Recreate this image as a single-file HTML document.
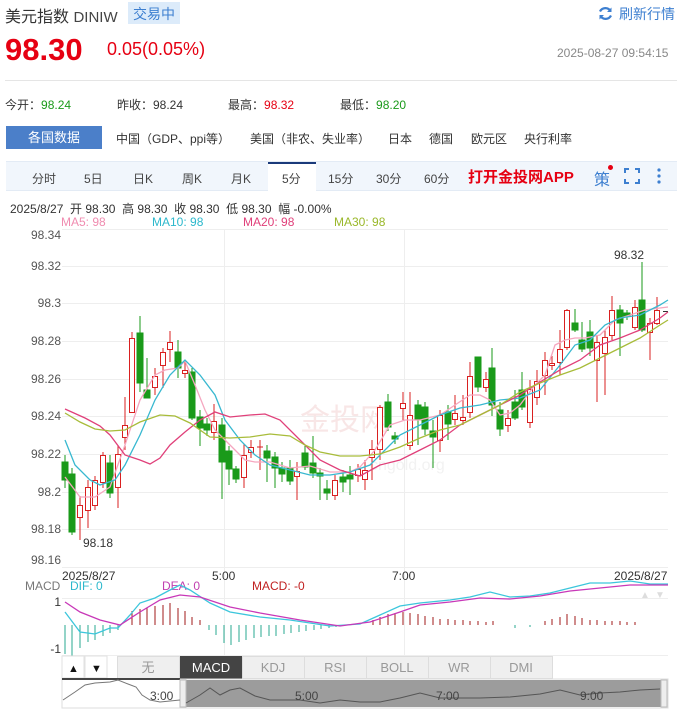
<!DOCTYPE html>
<html><head><meta charset="utf-8"><style>
*{margin:0;padding:0;box-sizing:border-box}
body{width:677px;height:709px;overflow:hidden;background:#fff;font-family:"Liberation Sans","Noto Sans CJK SC",sans-serif;color:#333;position:relative}
.a{position:absolute;white-space:nowrap}
</style></head><body>
<div class="a" style="left:5px;top:3px;font-size:16px;color:#333">美元指数 <span style="font-size:15px;color:#444">DINIW</span></div>
<div class="a" style="left:128px;top:2px;height:22px;padding:2px 5px;background:#dcebfa;color:#3d7fd0;font-size:14px">交易中</div>
<svg class="a" style="left:598px;top:6px" width="15" height="15"><path d="M12.5 5A6 6 0 0 0 2 5.5" fill="none" stroke="#3d7fd0" stroke-width="2.2"/><path d="M2.5 10A6 6 0 0 0 13 9.5" fill="none" stroke="#3d7fd0" stroke-width="2.2"/><path d="M13.5 1.5V6H9" fill="#3d7fd0"/><path d="M1.5 13.5V9H6" fill="#3d7fd0"/></svg>
<div class="a" style="left:619px;top:4px;font-size:14px;color:#3d7fd0">刷新行情</div>
<div class="a" style="left:5px;top:32px;font-size:31px;font-weight:bold;color:#e60012">98.30</div>
<div class="a" style="left:107px;top:39px;font-size:18px;color:#e60012">0.05(0.05%)</div>
<div class="a" style="left:557px;top:46px;font-size:12px;color:#888">2025-08-27 09:54:15</div>
<div class="a" style="left:5px;top:80px;width:672px;height:1px;background:#e5e5e5"></div>
<div class="a" style="left:5px;top:96px;font-size:12px">今开：<span style="color:#1a9a1a">98.24</span></div>
<div class="a" style="left:117px;top:96px;font-size:12px">昨收：98.24</div>
<div class="a" style="left:228px;top:96px;font-size:12px">最高：<span style="color:#e60012">98.32</span></div>
<div class="a" style="left:340px;top:96px;font-size:12px">最低：<span style="color:#1a9a1a">98.20</span></div>
<div class="a" style="left:6px;top:126px;width:96px;height:23px;background:#4b7fc9;color:#fff;font-size:13px;text-align:center;line-height:23px">各国数据</div>
<div class="a" style="left:116px;top:130px;font-size:12px">中国（GDP、ppi等）</div>
<div class="a" style="left:250px;top:130px;font-size:12px">美国（非农、失业率）</div>
<div class="a" style="left:388px;top:130px;font-size:12px">日本</div>
<div class="a" style="left:429px;top:130px;font-size:12px">德国</div>
<div class="a" style="left:471px;top:130px;font-size:12px">欧元区</div>
<div class="a" style="left:524px;top:130px;font-size:12px">央行利率</div>
<div class="a" style="left:6px;top:161px;width:671px;height:30px;background:#f1f6fc;border-top:1px solid #e3ebf5;border-bottom:1px solid #e3ebf5"></div>
<div class="a" style="left:268px;top:162px;width:48px;height:30px;background:#fff;border-top:2px solid #1a3a7a"></div>
<div class="a" style="top:170px;left:0;font-size:12px;color:#444">
<span class="a" style="left:32px">分时</span><span class="a" style="left:84px">5日</span><span class="a" style="left:133px">日K</span><span class="a" style="left:182px">周K</span><span class="a" style="left:231px">月K</span><span class="a" style="left:282px">5分</span><span class="a" style="left:328px">15分</span><span class="a" style="left:376px">30分</span><span class="a" style="left:424px">60分</span></div>
<div class="a" style="left:468px;top:166px;font-size:15px;font-weight:bold;color:#e60012">打开金投网APP</div>
<div class="a" style="left:594px;top:166px;font-size:16px;color:#3d7fd0">策</div>
<div class="a" style="left:608px;top:165px;width:5px;height:5px;border-radius:50%;background:#e60012"></div>
<svg class="a" style="left:624px;top:168px" width="16" height="16"><path d="M1 5V1H5M11 1H15V5M15 11V15H11M5 15H1V11" fill="none" stroke="#3d7fd0" stroke-width="2"/></svg>
<svg class="a" style="left:656px;top:167px" width="6" height="18"><circle cx="3" cy="3" r="1.6" fill="#3d7fd0"/><circle cx="3" cy="9" r="1.6" fill="#3d7fd0"/><circle cx="3" cy="15" r="1.6" fill="#3d7fd0"/></svg>
<div class="a" style="left:10px;top:200px;font-size:12px;color:#333">2025/8/27 &nbsp;开 98.30 &nbsp;高 98.30 &nbsp;收 98.30 &nbsp;低 98.30 &nbsp;幅 -0.00%</div>
<div class="a" style="left:61px;top:215px;font-size:12px;color:#f08cb0">MA5: 98</div>
<div class="a" style="left:152px;top:215px;font-size:12px;color:#2cb8cc">MA10: 98</div>
<div class="a" style="left:243px;top:215px;font-size:12px;color:#e0407a">MA20: 98</div>
<div class="a" style="left:334px;top:215px;font-size:12px;color:#9ab82a">MA30: 98</div>

<svg class="a" style="left:0;top:0" width="677" height="709" font-family="Liberation Sans" font-size="12">
<g stroke="#eee" stroke-width="1">
<line x1="62" y1="229.5" x2="668" y2="229.5"/><line x1="62" y1="266.5" x2="668" y2="266.5"/><line x1="62" y1="303.5" x2="668" y2="303.5"/><line x1="62" y1="341.5" x2="668" y2="341.5"/><line x1="62" y1="379.5" x2="668" y2="379.5"/><line x1="62" y1="416.5" x2="668" y2="416.5"/><line x1="62" y1="454.5" x2="668" y2="454.5"/><line x1="62" y1="492.5" x2="668" y2="492.5"/><line x1="62" y1="529.5" x2="668" y2="529.5"/><line x1="62" y1="567.5" x2="668" y2="567.5"/>
<line x1="224.5" y1="229" x2="224.5" y2="655"/><line x1="404.5" y1="229" x2="404.5" y2="655"/>
<line x1="62" y1="598.5" x2="668" y2="598.5"/><line x1="62" y1="655.5" x2="668" y2="655.5"/>
</g>
<g fill="#555" text-anchor="end">
<text x="61" y="239">98.34</text><text x="61" y="270">98.32</text><text x="61" y="307">98.3</text><text x="61" y="345">98.28</text><text x="61" y="383">98.26</text><text x="61" y="420">98.24</text><text x="61" y="458">98.22</text><text x="61" y="496">98.2</text><text x="61" y="533">98.18</text><text x="61" y="564">98.16</text>
</g>
<text x="83" y="547" fill="#333">98.18</text><text x="614" y="259" fill="#333">98.32</text>
<text x="62" y="580" fill="#333">2025/8/27</text><text x="212" y="580" fill="#333">5:00</text><text x="392" y="580" fill="#333">7:00</text><text x="614" y="580" fill="#333">2025/8/27</text>
<text x="300" y="430" font-size="30" fill="#f8e6e6" font-family="Noto Sans CJK SC">金投网</text>
<text x="370" y="470" font-size="16" fill="#f2f2f2">cngold.org</text>
<g stroke-width="1">
<g stroke="#1a9a1a" fill="#1a9a1a">
<line x1="65" y1="455" x2="65" y2="488"/><rect x="62" y="462" width="6" height="18"/>
<line x1="72" y1="468" x2="72" y2="535"/><rect x="69" y="474" width="6" height="58"/>
<line x1="110" y1="455" x2="110" y2="498"/><rect x="107" y="463" width="6" height="30"/>
<line x1="140" y1="316" x2="140" y2="392"/><rect x="137" y="333" width="6" height="50"/>
<line x1="147" y1="358" x2="147" y2="398"/><rect x="144" y="390" width="6" height="8"/>
<line x1="178" y1="340" x2="178" y2="378"/><rect x="175" y="352" width="6" height="16"/>
<line x1="192" y1="368" x2="192" y2="420"/><rect x="189" y="372" width="6" height="46"/>
<line x1="200" y1="410" x2="200" y2="446"/><rect x="197" y="417" width="6" height="11"/>
<line x1="207" y1="418" x2="207" y2="436"/><rect x="204" y="424" width="6" height="6"/>
<line x1="222" y1="418" x2="222" y2="499"/><rect x="219" y="425" width="6" height="37"/>
<line x1="229" y1="446" x2="229" y2="485"/><rect x="226" y="451" width="6" height="18"/>
<line x1="236" y1="466" x2="236" y2="483"/><rect x="233" y="469" width="6" height="10"/>
<line x1="267" y1="445" x2="267" y2="482"/><rect x="264" y="451" width="6" height="7"/>
<line x1="275" y1="452" x2="275" y2="488"/><rect x="272" y="457" width="6" height="11"/>
<line x1="282" y1="462" x2="282" y2="482"/><rect x="279" y="468" width="6" height="6"/>
<line x1="290" y1="460" x2="290" y2="485"/><rect x="287" y="468" width="6" height="13"/>
<line x1="305" y1="446" x2="305" y2="470"/><rect x="302" y="453" width="6" height="14"/>
<line x1="313" y1="436" x2="313" y2="478"/><rect x="310" y="463" width="6" height="10"/>
<line x1="320" y1="468" x2="320" y2="500"/><rect x="317" y="473" width="6" height="3"/>
<line x1="327" y1="480" x2="327" y2="500"/><rect x="324" y="489" width="6" height="4"/>
<line x1="343" y1="470" x2="343" y2="492"/><rect x="340" y="477" width="6" height="5"/>
<line x1="350" y1="466" x2="350" y2="495"/><rect x="347" y="475" width="6" height="4"/>
<line x1="388" y1="394" x2="388" y2="431"/><rect x="385" y="402" width="6" height="25"/>
<line x1="395" y1="432" x2="395" y2="444"/><rect x="392" y="436" width="6" height="3"/>
<line x1="418" y1="400" x2="418" y2="445"/><rect x="415" y="405" width="6" height="15"/>
<line x1="425" y1="402" x2="425" y2="435"/><rect x="422" y="407" width="6" height="22"/>
<line x1="433" y1="420" x2="433" y2="468"/><rect x="430" y="431" width="6" height="6"/>
<line x1="448" y1="405" x2="448" y2="440"/><rect x="445" y="412" width="6" height="12"/>
<line x1="478" y1="357" x2="478" y2="392"/><rect x="475" y="357" width="6" height="30"/>
<line x1="492" y1="348" x2="492" y2="416"/><rect x="489" y="368" width="6" height="37"/>
<line x1="500" y1="402" x2="500" y2="436"/><rect x="497" y="410" width="6" height="19"/>
<line x1="515" y1="390" x2="515" y2="420"/><rect x="512" y="402" width="6" height="16"/>
<line x1="522" y1="372" x2="522" y2="410"/><rect x="519" y="390" width="6" height="17"/>
<line x1="575" y1="309" x2="575" y2="332"/><rect x="572" y="323" width="6" height="7"/>
<line x1="582" y1="322" x2="582" y2="352"/><rect x="579" y="340" width="6" height="9"/>
<line x1="590" y1="320" x2="590" y2="356"/><rect x="587" y="332" width="6" height="16"/>
<line x1="620" y1="305" x2="620" y2="356"/><rect x="617" y="310" width="6" height="13"/>
<line x1="627" y1="310" x2="627" y2="320"/><rect x="624" y="313" width="6" height="3"/>
<line x1="642" y1="262" x2="642" y2="332"/><rect x="639" y="300" width="6" height="30"/>
</g>
<g stroke="#d92020" fill="#fff">
<line x1="80" y1="496" x2="80" y2="540"/><rect x="77.5" y="505.5" width="5" height="12"/>
<line x1="88" y1="480" x2="88" y2="528"/><rect x="85.5" y="487.5" width="5" height="23"/>
<line x1="95" y1="476" x2="95" y2="510"/><rect x="92.5" y="480.5" width="5" height="25"/>
<line x1="103" y1="452" x2="103" y2="488"/><rect x="100.5" y="455.5" width="5" height="27"/>
<line x1="118" y1="445" x2="118" y2="508"/><rect x="115.5" y="454.5" width="5" height="33"/>
<line x1="125" y1="397" x2="125" y2="450"/><rect x="122.5" y="425.5" width="5" height="12"/>
<line x1="132" y1="332" x2="132" y2="412"/><rect x="129.5" y="338.5" width="5" height="74"/>
<line x1="155" y1="368" x2="155" y2="395"/><rect x="152.5" y="376.5" width="5" height="11"/>
<line x1="163" y1="348" x2="163" y2="388"/><rect x="160.5" y="352.5" width="5" height="13"/>
<line x1="170" y1="331" x2="170" y2="362"/><rect x="167.5" y="342.5" width="5" height="7"/>
<line x1="185" y1="362" x2="185" y2="378"/><rect x="182.5" y="370.5" width="5" height="3"/>
<line x1="214" y1="404" x2="214" y2="440"/><rect x="211.5" y="421.5" width="5" height="11"/>
<line x1="244" y1="444" x2="244" y2="488"/><rect x="241.5" y="455.5" width="5" height="22"/>
<line x1="251" y1="440" x2="251" y2="458"/><rect x="248.5" y="447.5" width="5" height="5"/>
<line x1="260" y1="440" x2="260" y2="470"/><line x1="257" y1="447" x2="263" y2="447"/>
<line x1="297" y1="462" x2="297" y2="500"/><rect x="294.5" y="471.5" width="5" height="5"/>
<line x1="335" y1="475" x2="335" y2="500"/><rect x="332.5" y="480.5" width="5" height="15"/>
<line x1="358" y1="464" x2="358" y2="482"/><rect x="355.5" y="469.5" width="5" height="6"/>
<line x1="365" y1="460" x2="365" y2="490"/><rect x="362.5" y="470.5" width="5" height="9"/>
<line x1="372" y1="440" x2="372" y2="480"/><rect x="369.5" y="449.5" width="5" height="8"/>
<line x1="380" y1="405" x2="380" y2="460"/><rect x="377.5" y="407.5" width="5" height="42"/>
<line x1="403" y1="392" x2="403" y2="420"/><rect x="400.5" y="403.5" width="5" height="5"/>
<line x1="410" y1="392" x2="410" y2="450"/><rect x="407.5" y="415.5" width="5" height="30"/>
<line x1="440" y1="410" x2="440" y2="452"/><rect x="437.5" y="415.5" width="5" height="25"/>
<line x1="455" y1="395" x2="455" y2="425"/><rect x="452.5" y="413.5" width="5" height="6"/>
<line x1="463" y1="395" x2="463" y2="425"/><rect x="460.5" y="417.5" width="5" height="3"/>
<line x1="470" y1="362" x2="470" y2="418"/><rect x="467.5" y="376.5" width="5" height="36"/>
<line x1="486" y1="372" x2="486" y2="392"/><rect x="483.5" y="379.5" width="5" height="8"/>
<line x1="508" y1="410" x2="508" y2="432"/><rect x="505.5" y="418.5" width="5" height="7"/>
<line x1="530" y1="380" x2="530" y2="428"/><rect x="527.5" y="389.5" width="5" height="33"/>
<line x1="537" y1="370" x2="537" y2="405"/><rect x="534.5" y="381.5" width="5" height="16"/>
<line x1="545" y1="352" x2="545" y2="395"/><rect x="542.5" y="360.5" width="5" height="15"/>
<line x1="552" y1="356" x2="552" y2="370"/><rect x="549.5" y="363.5" width="5" height="2"/>
<line x1="560" y1="330" x2="560" y2="375"/><rect x="557.5" y="349.5" width="5" height="13"/>
<line x1="567" y1="309" x2="567" y2="350"/><rect x="564.5" y="310.5" width="5" height="37"/>
<line x1="597" y1="335" x2="597" y2="402"/><rect x="594.5" y="342.5" width="5" height="18"/>
<line x1="605" y1="330" x2="605" y2="395"/><rect x="602.5" y="337.5" width="5" height="16"/>
<line x1="612" y1="296" x2="612" y2="340"/><rect x="609.5" y="310.5" width="5" height="25"/>
<line x1="635" y1="300" x2="635" y2="330"/><rect x="632.5" y="307.5" width="5" height="20"/>
<line x1="650" y1="318" x2="650" y2="360"/><rect x="647.5" y="323.5" width="5" height="9"/>
<line x1="657" y1="297" x2="657" y2="325"/><rect x="654.5" y="310.5" width="5" height="13"/>
<line x1="663" y1="311.5" x2="668" y2="311.5" stroke="#333"/>
</g>
</g>
<g fill="none" stroke-width="1.3">
<polyline stroke="#f5a6bf" points="65,477 80,497 95,497 110,487 125,445 140,400 155,375 165,370 178,368 185,361 195,385 205,410 215,430 225,440 235,450 245,460 255,462 270,462 290,468 310,466 330,472 350,472 360,467 375,450 390,425 405,420 420,420 440,415 455,405 470,395 480,395 490,400 500,415 510,413 520,405 535,385 545,375 555,345 565,340 575,338 585,338 600,335 615,320 630,315 645,310 660,308 668,307"/>
<polyline stroke="#38b8d0" points="65,440 75,465 90,480 100,485 115,480 125,465 140,435 155,400 170,375 185,360 200,375 215,395 225,420 240,440 255,455 270,465 290,470 310,475 330,475 350,472 370,465 385,450 400,435 420,425 440,415 460,408 480,405 500,400 520,398 540,390 560,365 575,345 590,340 605,325 620,318 640,315 660,305 668,300"/>
<polyline stroke="#e0407a" points="65,409 85,418 100,426 110,435 125,455 140,460 150,464 160,458 170,445 185,432 200,420 215,412 230,417 250,415 265,414 280,420 300,440 320,460 340,470 360,476 380,465 400,460 420,450 440,440 460,425 480,415 500,405 520,395 540,382 560,370 580,360 600,345 620,338 640,330 660,318 668,312"/>
<polyline stroke="#a8bc3a" points="65,413 80,422 95,429 110,431 125,430 140,422 160,415 175,416 190,423 210,437 230,438 250,437 270,434 290,436 305,445 320,452 340,456 360,456 380,454 400,447 420,438 440,430 460,425 480,415 500,405 520,392 540,383 560,375 580,368 600,358 620,348 640,338 660,325 668,320"/>
</g>
<text x="25" y="590" fill="#777">MACD</text><text x="70" y="590" fill="#2cb8cc">DIF: 0</text><text x="162" y="590" fill="#c040b0">DEA: 0</text><text x="252" y="590" fill="#c02020">MACD: -0</text>
<text x="61" y="606" fill="#333" text-anchor="end">1</text><text x="61" y="653" fill="#333" text-anchor="end">-1</text>
<g stroke="#2aaa90" stroke-width="1">
<path d="M65 625V654M72 625V656M80 625V648M88 625V642M95 625V640M103 625V636M110 625V633M118 625V630"/>
<path d="M209 625V630M216 625V635M224 625V643M231 625V645M239 625V642M246 625V640M254 625V638M261 625V637M269 625V636M276 625V636M284 625V634M291 625V633M299 625V632M306 625V631M314 625V630M321 625V629M329 625V628M336 625V627M343 625V626"/>
<path d="M515 625V628M530 625V627"/>
</g>
<g stroke="#a01818" stroke-width="1">
<path d="M132 625V611M140 625V609M147 625V608M155 625V606M163 625V605M170 625V603M178 625V608M185 625V611M192 625V617M200 625V620"/>
<path d="M373 625V620M380 625V617M388 625V614M395 625V613M403 625V612M410 625V613M418 625V614M425 625V616M433 625V617M440 625V619M448 625V619M455 625V620M463 625V620M470 625V621M478 625V621M486 625V622M493 625V621"/>
<path d="M545 625V621M552 625V619M560 625V617M567 625V614M575 625V616M582 625V618M590 625V620M597 625V620M605 625V621M612 625V621M620 625V621M627 625V622M635 625V622"/>
</g>
<g fill="none" stroke-width="1.3">
<polyline stroke="#3cc6dc" points="65,612 80,632 95,634 110,628 118,628 130,615 140,603 155,598 170,590 180,585 190,590 210,603 230,612 260,617 290,620 330,626 360,624 380,615 400,606 420,603 450,600 470,597 490,592 510,597 530,596 550,593 570,588 590,583 610,583 630,581 650,584 668,584"/>
<polyline stroke="#c838b8" points="65,602 80,612 100,620 120,625 140,612 160,600 180,595 200,597 230,607 260,613 300,620 340,626 370,622 400,612 420,605 450,602 480,598 510,599 540,596 570,591 600,588 630,585 668,585"/>
</g>
<text x="640" y="598" fill="#ddd" font-size="10">▲</text><text x="655" y="598" fill="#ddd" font-size="10">▼</text>
<rect x="62" y="656" width="22" height="22" fill="#fff" stroke="#e2e2e2"/><rect x="85" y="656" width="22" height="22" fill="#fff" stroke="#e2e2e2"/>
<text x="68" y="672" fill="#111" font-size="11">▲</text><text x="91" y="672" fill="#111" font-size="11">▼</text>
<g stroke="#ddd" fill="#efefef"><rect x="117.5" y="656.5" width="62" height="22"/><rect x="242.5" y="656.5" width="62" height="22"/><rect x="304.5" y="656.5" width="62" height="22"/><rect x="366.5" y="656.5" width="62" height="22"/><rect x="428.5" y="656.5" width="62" height="22"/><rect x="490.5" y="656.5" width="62" height="22"/></g>
<rect x="180" y="656" width="62" height="23" fill="#444"/>
<g font-size="13" text-anchor="middle" fill="#999"><text x="148" y="672" font-family="Noto Sans CJK SC">无</text><text x="211" y="672" fill="#fff">MACD</text><text x="273" y="672">KDJ</text><text x="335" y="672">RSI</text><text x="397" y="672">BOLL</text><text x="459" y="672">WR</text><text x="521" y="672">DMI</text></g>
<rect x="62" y="679" width="606" height="29" fill="#fff" stroke="#ddd"/>
<rect x="62" y="678" width="118" height="2" fill="#444"/>
<rect x="184" y="680" width="478" height="27" fill="#9c9c9c"/>
<rect x="180" y="680" width="6" height="27" fill="#eee" stroke="#bbb"/><rect x="661" y="680" width="6" height="27" fill="#eee" stroke="#bbb"/>
<polyline fill="none" stroke="#777" points="63,700 75,692 85,685 95,683 110,682 118,680 128,684 136,687 142,695 150,700 160,702 170,701 180,700"/>
<polyline fill="none" stroke="#555" points="186,703 200,695 210,688 220,695 230,690 240,688 255,696 270,700 300,700 320,703 340,700 360,702 380,702 400,698 420,693 440,698 460,698 480,698 510,697 540,694 560,690 580,695 600,693 620,692 640,690 660,689"/>
<g font-size="12" fill="#444"><text x="150" y="700">3:00</text><text x="295" y="700">5:00</text><text x="436" y="700">7:00</text><text x="580" y="700">9:00</text></g>
</svg>
</body></html>
